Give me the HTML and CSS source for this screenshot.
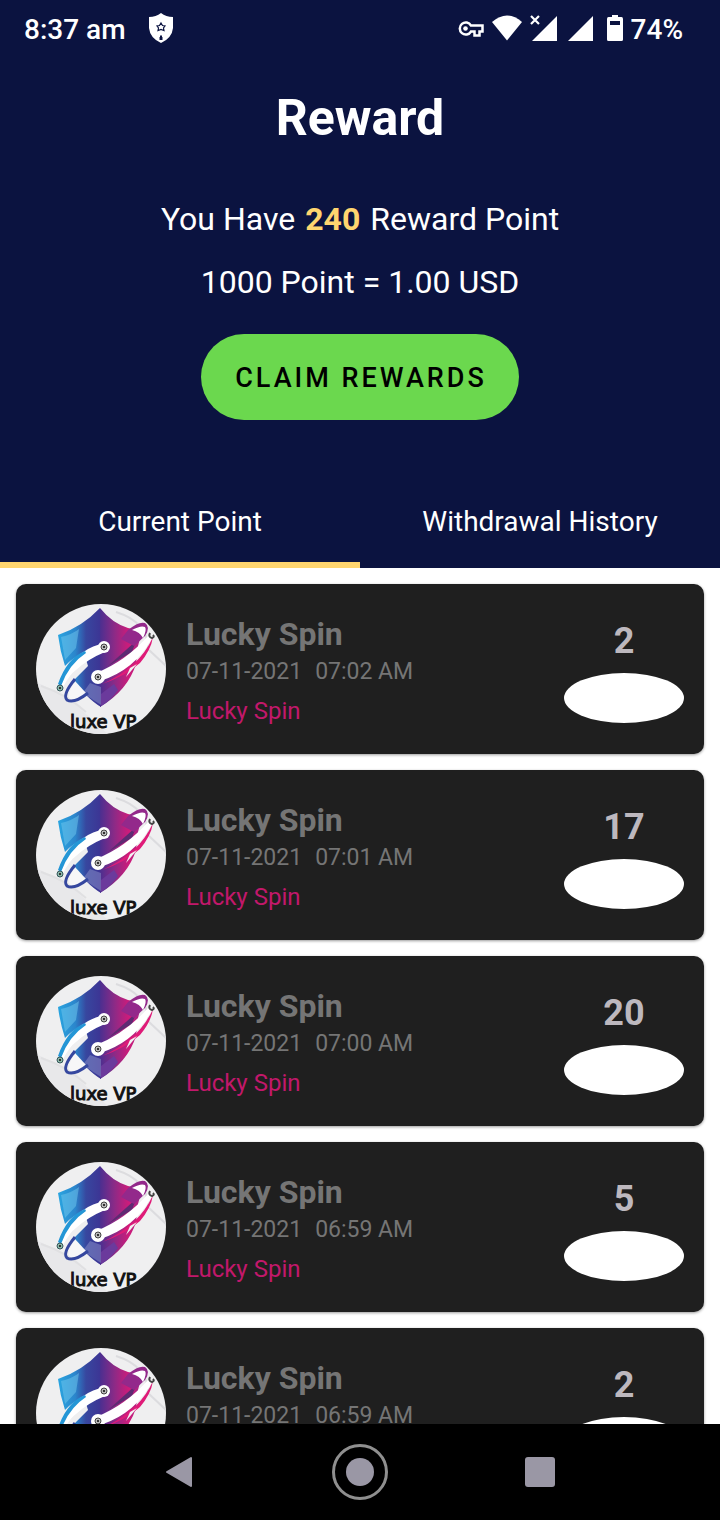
FILE: index.html
```html
<!DOCTYPE html>
<html lang="en">
<head>
  <meta charset="UTF-8">
  <title>Reward</title>
  <meta name="viewport" content="width=device-width, initial-scale=1.0">
  <link rel="stylesheet" href="styles.css">
</head>
<body>
  <!-- shared app logo -->
  <svg class="sprite" width="0" height="0" aria-hidden="true">
    <defs>
      <linearGradient id="shieldLeft" x1="0" y1="0" x2="1" y2="0">
        <stop offset="0" stop-color="#2aa5e0"/>
        <stop offset="0.4" stop-color="#2b86cc"/>
        <stop offset="0.65" stop-color="#37479f"/>
        <stop offset="1" stop-color="#3d3494"/>
      </linearGradient>
      <linearGradient id="shieldRight" x1="0" y1="0" x2="1" y2="0">
        <stop offset="0" stop-color="#4b2f90"/>
        <stop offset="0.35" stop-color="#8d2a86"/>
        <stop offset="0.7" stop-color="#d01b7a"/>
        <stop offset="1" stop-color="#982a8a"/>
      </linearGradient>
      <clipPath id="round"><circle cx="65" cy="65" r="65"/></clipPath>
    </defs>
    <symbol id="logo" viewBox="0 0 130 130">
      <g clip-path="url(#round)">
        <rect width="130" height="130" fill="#efeff0"/>
        <path d="M0 78L30 92L72 130H0z" fill="#e8e8ea"/>
        <path d="M80 8Q112 18 112 45L130 62" fill="none" stroke="#dcdcdf" stroke-width="2"/>
        <path d="M5 82Q30 90 50 108" fill="none" stroke="#e0e0e2" stroke-width="2"/>

        <path d="M64 4Q46 23 22 31Q24 47 29 62Q36 54 48 49L52 62L37 77Q42 85 50 91Q58 99 65 103z" fill="url(#shieldLeft)"/>
        <path d="M64 4Q76 19 92 24L106 27L102 42L100 60Q92 86 64 103z" fill="url(#shieldRight)"/>
        <path d="M25 33Q37 30 43 25L40 44L29 56z" fill="#72c8ee" opacity="0.5"/>
        <path d="M46 90L54 79L65 83V101Q57 96 50 91z" fill="#8c91c9" opacity="0.5"/>
        <path d="M65 90L78 80L82 86Q75 96 65 102z" fill="#6b3a9c"/>
        <path d="M72 62L100 37L96 48z" fill="#5e2a72"/>

        <!-- left orbit -->
        <path d="M68 39Q56 42 49 47Q34 55 24 81L27 83Q34 70 40 66Q52 55 69 48z" fill="#fff"/>
        <path d="M49 47Q31 54 22 80L25 82Q33 60 50 49z" fill="#2496d6"/>
        <path d="M39 77L50 89Q38 98 33 94Q31 90 39 77z" fill="#f7f7f8"/>
        <path d="M39 75Q26 91 31 96Q38 100 52 89" fill="none" stroke="#35479f" stroke-width="3"/>

        <!-- right orbit -->
        <path d="M94 26L108 21L107 33L99 35z" fill="#fff"/>
        <path d="M92 26Q103 17 109 19Q115 23 109 32L98 42L85 35z" fill="#93298b"/>
        <path d="M96 26Q105 21 109 23Q111 26 107 34Q104 28 96 26z" fill="#fff"/>
        <path d="M60 69Q90 57 113 31L116 34Q99 66 64 77z" fill="#fff"/>
        <path d="M117 33Q103 64 66 80Q88 73 104 59Q115 46 117 33z" fill="#df1b78"/>
        <path d="M94 64L90 73L101 60z" fill="#f2f2f3"/>

        <circle cx="68" cy="43" r="6" fill="#fff"/>
        <circle cx="62" cy="73" r="7" fill="#fff"/>
        <circle cx="68" cy="43" r="3" fill="#bbb" stroke="#444" stroke-width="1"/>
        <circle cx="62" cy="73" r="3" fill="#bbb" stroke="#444" stroke-width="1"/>
        <circle cx="24" cy="84" r="3" fill="#8bb8a8" stroke="#35565a" stroke-width="1"/>
        <path d="M114 29Q112 33 116 34Q119 33 117 31" fill="none" stroke="#444" stroke-width="2"/>
        <path d="M68 42v2M62 72v2M24 83v2" stroke="#333" stroke-width="2"/>
        <text class="logo-text" x="34" y="124">luxe VP</text>
      </g>
    </symbol>
  </svg>

  <div class="screen">
    <header class="top">
      <div class="status">
        <span>8:37 am</span>
        <svg class="status-shield" width="26" height="30" viewBox="0 0 26 30">
          <path d="M13 0Q18 4 25 4V15Q24 25 13 30Q2 25 1 15V4Q8 4 13 0z" fill="#fff"/>
          <path d="M13 10L14.500 12.500L17 13L15.500 15L16 17.500L13 16.500L10 17.500L10.500 15L9 13L11.500 12.500z" fill="none" stroke="#0b1340" stroke-width="1.200"/>
          <path d="M11.500 24h3v3h-3zM12 24v-1.500h2V24" fill="#0b1340"/>
        </svg>
        <div class="status-icons">
          <svg width="26" height="26" viewBox="0 0 26 26">
            <path d="M13 10.500A6 6 0 1 0 13 16.500H16.500V20.500H21.500V16.500H24.500V10.500z" fill="none" stroke="#fff" stroke-width="2.500"/>
            <circle cx="7.500" cy="13.500" r="2.300" fill="#fff"/>
          </svg>
          <svg width="30" height="26" viewBox="0 0 30 26">
            <path d="M0 7Q15 -6 30 7L15 25.500z" fill="#fff"/>
          </svg>
          <svg width="28" height="26" viewBox="0 0 28 26">
            <path d="M27 1V26H2z" fill="#fff"/>
            <path d="M0 0H11L12 11H0z" fill="#0b1340"/>
            <path d="M1 1L9 9M9 1L1 9" stroke="#fff" stroke-width="2.200"/>
          </svg>
          <svg width="33" height="26" viewBox="0 0 33 26">
            <path d="M27 1V26H2z" fill="#fff"/>
          </svg>
          <svg width="16" height="26" viewBox="0 0 16 26">
            <path d="M5 0H11V2H14.500Q16 2 16 4V24.500Q16 26 14.500 26H1.500Q0 26 0 24.500V4Q0 2 1.500 2H5z" fill="#fff"/>
            <path d="M3 6H13V10H3z" fill="#0b1340"/>
          </svg>
          <span>74%</span>
        </div>
      </div>

      <h1>Reward</h1>
      <p class="points"><span>You Have</span> <strong>240</strong> <span>Reward Point</span></p>
      <p class="rate">1000 Point = 1.00 USD</p>
      <button class="claim" type="button">CLAIM REWARDS</button>

      <nav class="tabs">
        <button class="tab active" type="button">Current Point</button>
        <button class="tab" type="button">Withdrawal History</button>
      </nav>
    </header>

    <main class="list">
      <article class="card">
        <svg class="avatar" role="img" aria-label="Logo"><use href="#logo"/></svg>
        <div class="info">
          <h2>Lucky Spin</h2>
          <p class="date"><span>07-11-2021</span><span>07:02 AM</span></p>
          <p class="type">Lucky Spin</p>
        </div>
        <div class="score"><b>2</b><span class="badge"></span></div>
      </article>

      <article class="card">
        <svg class="avatar" role="img" aria-label="Logo"><use href="#logo"/></svg>
        <div class="info">
          <h2>Lucky Spin</h2>
          <p class="date"><span>07-11-2021</span><span>07:01 AM</span></p>
          <p class="type">Lucky Spin</p>
        </div>
        <div class="score"><b>17</b><span class="badge"></span></div>
      </article>

      <article class="card">
        <svg class="avatar" role="img" aria-label="Logo"><use href="#logo"/></svg>
        <div class="info">
          <h2>Lucky Spin</h2>
          <p class="date"><span>07-11-2021</span><span>07:00 AM</span></p>
          <p class="type">Lucky Spin</p>
        </div>
        <div class="score"><b>20</b><span class="badge"></span></div>
      </article>

      <article class="card">
        <svg class="avatar" role="img" aria-label="Logo"><use href="#logo"/></svg>
        <div class="info">
          <h2>Lucky Spin</h2>
          <p class="date"><span>07-11-2021</span><span>06:59 AM</span></p>
          <p class="type">Lucky Spin</p>
        </div>
        <div class="score"><b>5</b><span class="badge"></span></div>
      </article>

      <article class="card">
        <svg class="avatar" role="img" aria-label="Logo"><use href="#logo"/></svg>
        <div class="info">
          <h2>Lucky Spin</h2>
          <p class="date"><span>07-11-2021</span><span>06:59 AM</span></p>
          <p class="type">Lucky Spin</p>
        </div>
        <div class="score"><b>2</b><span class="badge"></span></div>
      </article>
    </main>

    <footer class="navbar">
      <button type="button" aria-label="Back">
        <svg width="32" height="32" viewBox="0 0 32 32">
          <path d="M27 2V30L3 16z" fill="#9a97a5" stroke="#9a97a5" stroke-width="2" stroke-linejoin="round"/>
        </svg>
      </button>
      <button type="button" aria-label="Home">
        <svg width="56" height="56" viewBox="0 0 56 56">
          <circle cx="28" cy="28" r="26.500" fill="none" stroke="#8f8f8f" stroke-width="3"/>
          <circle cx="28" cy="28" r="14" fill="#9a97a5"/>
        </svg>
      </button>
      <button type="button" aria-label="Recent apps">
        <svg width="30" height="30" viewBox="0 0 30 30">
          <rect width="30" height="30" rx="3" fill="#9a97a5"/>
        </svg>
      </button>
    </footer>
  </div>
</body>
</html>
```

FILE: styles.css
```css
* {
  box-sizing: border-box;
}

body {
  margin: 0;
  background: #fff;
  font-family: Roboto, "Noto Sans", sans-serif;
}

h1, h2, p {
  margin: 0;
}

button {
  border: 0;
  padding: 0;
  background: none;
  color: inherit;
  font: inherit;
  cursor: pointer;
}

svg {
  display: block;
}

.sprite {
  position: absolute;
}

.logo-text {
  font-family: "DejaVu Sans", sans-serif;
  font-size: 18px;
  fill: #111;
  stroke: #111;
  stroke-width: 1px;
}

.screen {
  display: flex;
  flex-direction: column;
  height: 100vh;
}

/* header */
.top {
  display: flex;
  flex-direction: column;
  align-items: center;
  flex-shrink: 0;
  background: #0b1340;
  color: #fff;
}

.status {
  display: flex;
  align-items: center;
  width: 100%;
  height: 56px;
  padding: 0 37px 0 24px;
  font-size: 28px;
  font-weight: 500;
}

.status span {
  padding-top: 2px;
}

.status-shield {
  margin-left: 22px;
}

.status-icons {
  display: flex;
  align-items: center;
  gap: 8px;
  margin-left: auto;
}

h1 {
  margin-top: 32px;
  font-size: 50px;
  line-height: 60px;
}

.points {
  display: flex;
  gap: 10px;
  margin-top: 51px;
  font-size: 32px;
  line-height: 40px;
}

.points strong {
  color: #ffd56f;
}

.rate {
  margin-top: 23px;
  font-size: 32px;
  line-height: 40px;
}

.claim {
  height: 86px;
  margin-top: 32px;
  padding: 2px 32px 0 34px;
  border-radius: 43px;
  background: #6bd84e;
  color: #000;
  font-size: 27px;
  font-weight: 500;
  letter-spacing: 3px;
}

.tabs {
  display: grid;
  grid-template-columns: 1fr 1fr;
  width: 100%;
  margin-top: 52px;
}

.tab {
  height: 96px;
  padding-top: 8px;
  border-bottom: 6px solid transparent;
  font-size: 28px;
}

.tab.active {
  border-bottom-color: #ffd56f;
}

/* reward list */
.list {
  display: flex;
  flex-direction: column;
  flex: 1;
  gap: 16px;
  min-height: 0;
  padding: 16px;
  overflow-y: auto;
  scrollbar-width: none;
}

.card {
  display: flex;
  align-items: center;
  flex-shrink: 0;
  gap: 20px;
  padding: 20px;
  border-radius: 10px;
  background: #1f1f1f;
  box-shadow: 0 1px 3px rgba(0, 0, 0, 0.4);
}

.avatar {
  width: 130px;
  height: 130px;
}

.info {
  flex: 1;
  padding-top: 8px;
  color: #757575;
}

.info h2 {
  font-size: 32px;
  line-height: 40px;
}

.date {
  display: flex;
  gap: 13px;
  font-size: 23px;
  line-height: 36px;
}

.type {
  color: #c2186b;
  font-size: 24px;
  line-height: 42px;
}

.score {
  display: flex;
  flex-direction: column;
  align-items: center;
  gap: 10px;
  padding-top: 4px;
  color: #bdb8be;
  font-size: 36px;
  line-height: 44px;
}

.badge {
  width: 120px;
  height: 50px;
  border-radius: 50%;
  background: #fff;
}

/* system buttons */
.navbar {
  display: grid;
  grid-template-columns: repeat(3, 1fr);
  flex-shrink: 0;
  height: 96px;
  padding: 0 12.5%;
  background: #000;
}

.navbar button {
  display: flex;
  align-items: center;
  justify-content: center;
}
```
